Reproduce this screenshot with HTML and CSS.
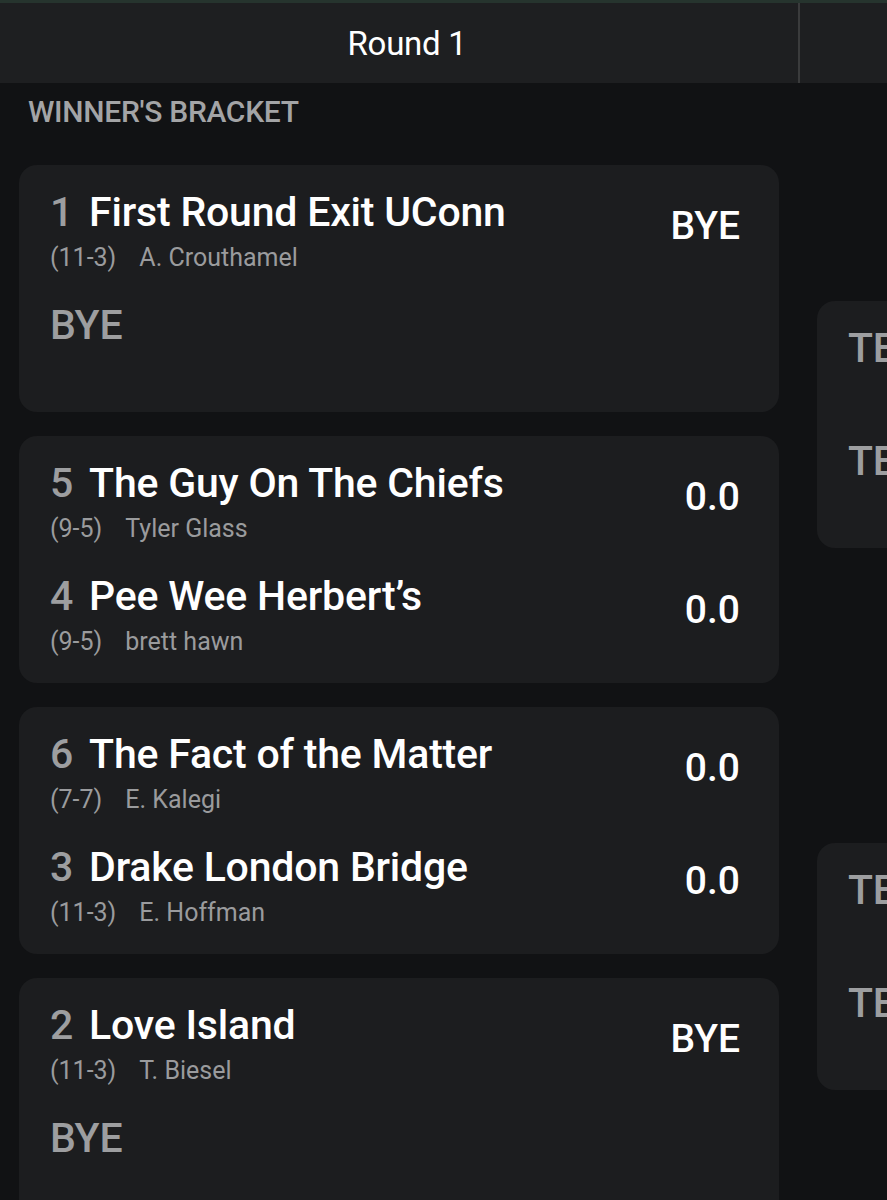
FILE: index.html
```html
<!DOCTYPE html>
<html>
<head>
<meta charset="utf-8">
<link rel="stylesheet" href="styles.css">
</head>
<body>
<div class="top-line"></div>
<div class="rounds">
  <section class="round">
    <header class="round-head">Round 1</header>
    <div class="bracket-label">WINNER'S BRACKET</div>
    <div class="matches">
      <div class="card">
        <div class="team">
          <div class="info">
            <div class="name"><span class="seed">1</span>First Round Exit UConn</div>
            <div class="sub"><span class="rec">(11-3)</span>A. Crouthamel</div>
          </div>
          <div class="score">BYE</div>
        </div>
        <div class="team">
          <div class="info">
            <div class="name bye">BYE</div>
          </div>
        </div>
      </div>
      <div class="card">
        <div class="team">
          <div class="info">
            <div class="name"><span class="seed">5</span>The Guy On The Chiefs</div>
            <div class="sub"><span class="rec">(9-5)</span>Tyler Glass</div>
          </div>
          <div class="score">0.0</div>
        </div>
        <div class="team">
          <div class="info">
            <div class="name"><span class="seed">4</span>Pee Wee Herbert’s</div>
            <div class="sub"><span class="rec">(9-5)</span>brett hawn</div>
          </div>
          <div class="score">0.0</div>
        </div>
      </div>
      <div class="card">
        <div class="team">
          <div class="info">
            <div class="name"><span class="seed">6</span>The Fact of the Matter</div>
            <div class="sub"><span class="rec">(7-7)</span>E. Kalegi</div>
          </div>
          <div class="score">0.0</div>
        </div>
        <div class="team">
          <div class="info">
            <div class="name"><span class="seed">3</span>Drake London Bridge</div>
            <div class="sub"><span class="rec">(11-3)</span>E. Hoffman</div>
          </div>
          <div class="score">0.0</div>
        </div>
      </div>
      <div class="card">
        <div class="team">
          <div class="info">
            <div class="name"><span class="seed">2</span>Love Island</div>
            <div class="sub"><span class="rec">(11-3)</span>T. Biesel</div>
          </div>
          <div class="score">BYE</div>
        </div>
        <div class="team">
          <div class="info">
            <div class="name bye">BYE</div>
          </div>
        </div>
      </div>
    </div>
  </section>
  <section class="round">
    <header class="round-head"></header>
    <div class="bracket-label"></div>
    <div class="matches">
      <div class="slot">
        <div class="card card-tbd">
          <div class="team"><div class="info"><div class="name tbd">TE</div></div></div>
          <div class="team"><div class="info"><div class="name tbd">TE</div></div></div>
        </div>
      </div>
      <div class="slot">
        <div class="card card-tbd">
          <div class="team"><div class="info"><div class="name tbd">TE</div></div></div>
          <div class="team"><div class="info"><div class="name tbd">TE</div></div></div>
        </div>
      </div>
    </div>
  </section>
</div>
</body>
</html>
```

FILE: styles.css
```css
html, body {
  margin: 0;
  padding: 0;
  background: #111214;
  overflow: hidden;
  height: 1200px;
}
body {
  font-family: Roboto, "Liberation Sans", sans-serif;
  color: #ffffff;
}
.top-line {
  height: 3px;
  background: #26342e;
}
.rounds {
  display: flex;
  width: 1600px;
}
.round {
  width: 798px;
  flex: 0 0 798px;
}
.round-head {
  height: 80px;
  background: #1e1f21;
  display: flex;
  align-items: center;
  justify-content: center;
  font-size: 33px;
  font-weight: 400;
  color: #ffffff;
  letter-spacing: -0.3px;
  box-sizing: border-box;
}
.round:first-child .round-head {
  border-right: 2px solid #3a3b3c;
  margin-right: -2px;
  padding-left: 16px;
  position: relative;
  z-index: 1;
}
.bracket-label {
  height: 56px;
  padding-left: 28px;
  display: flex;
  align-items: center;
  font-size: 30px;
  font-weight: 500;
  color: #a3a4a6;
  letter-spacing: -0.3px;
}
.matches {
  padding: 26px 19px 0 19px;
  display: flex;
  flex-direction: column;
  gap: 24px;
}
.slot {
  height: 518px;
  display: flex;
  flex-direction: column;
  justify-content: center;
}
.card {
  background: #1c1d1f;
  border-radius: 18px;
  height: 247px;
  box-sizing: border-box;
  padding: 24px 39px 0 31px;
  display: flex;
  flex-direction: column;
  gap: 31px;
}
.team {
  display: flex;
  justify-content: space-between;
  align-items: flex-start;
  height: 82px;
}
.name {
  height: 46px;
  line-height: 46px;
  font-size: 41px;
  font-weight: 500;
  color: #ffffff;
  white-space: nowrap;
  letter-spacing: -0.2px;
}
.seed {
  color: #9d9ea0;
  margin-right: 16px;
}
.name.bye, .name.tbd {
  color: #9d9ea0;
}
.sub {
  margin-top: 10px;
  height: 26px;
  line-height: 26px;
  font-size: 25px;
  color: #9a9b9d;
  white-space: nowrap;
}
.rec {
  margin-right: 23px;
}
.score {
  margin-top: 14px;
  height: 46px;
  line-height: 46px;
  font-size: 39px;
  font-weight: 500;
  color: #ffffff;
}
```
